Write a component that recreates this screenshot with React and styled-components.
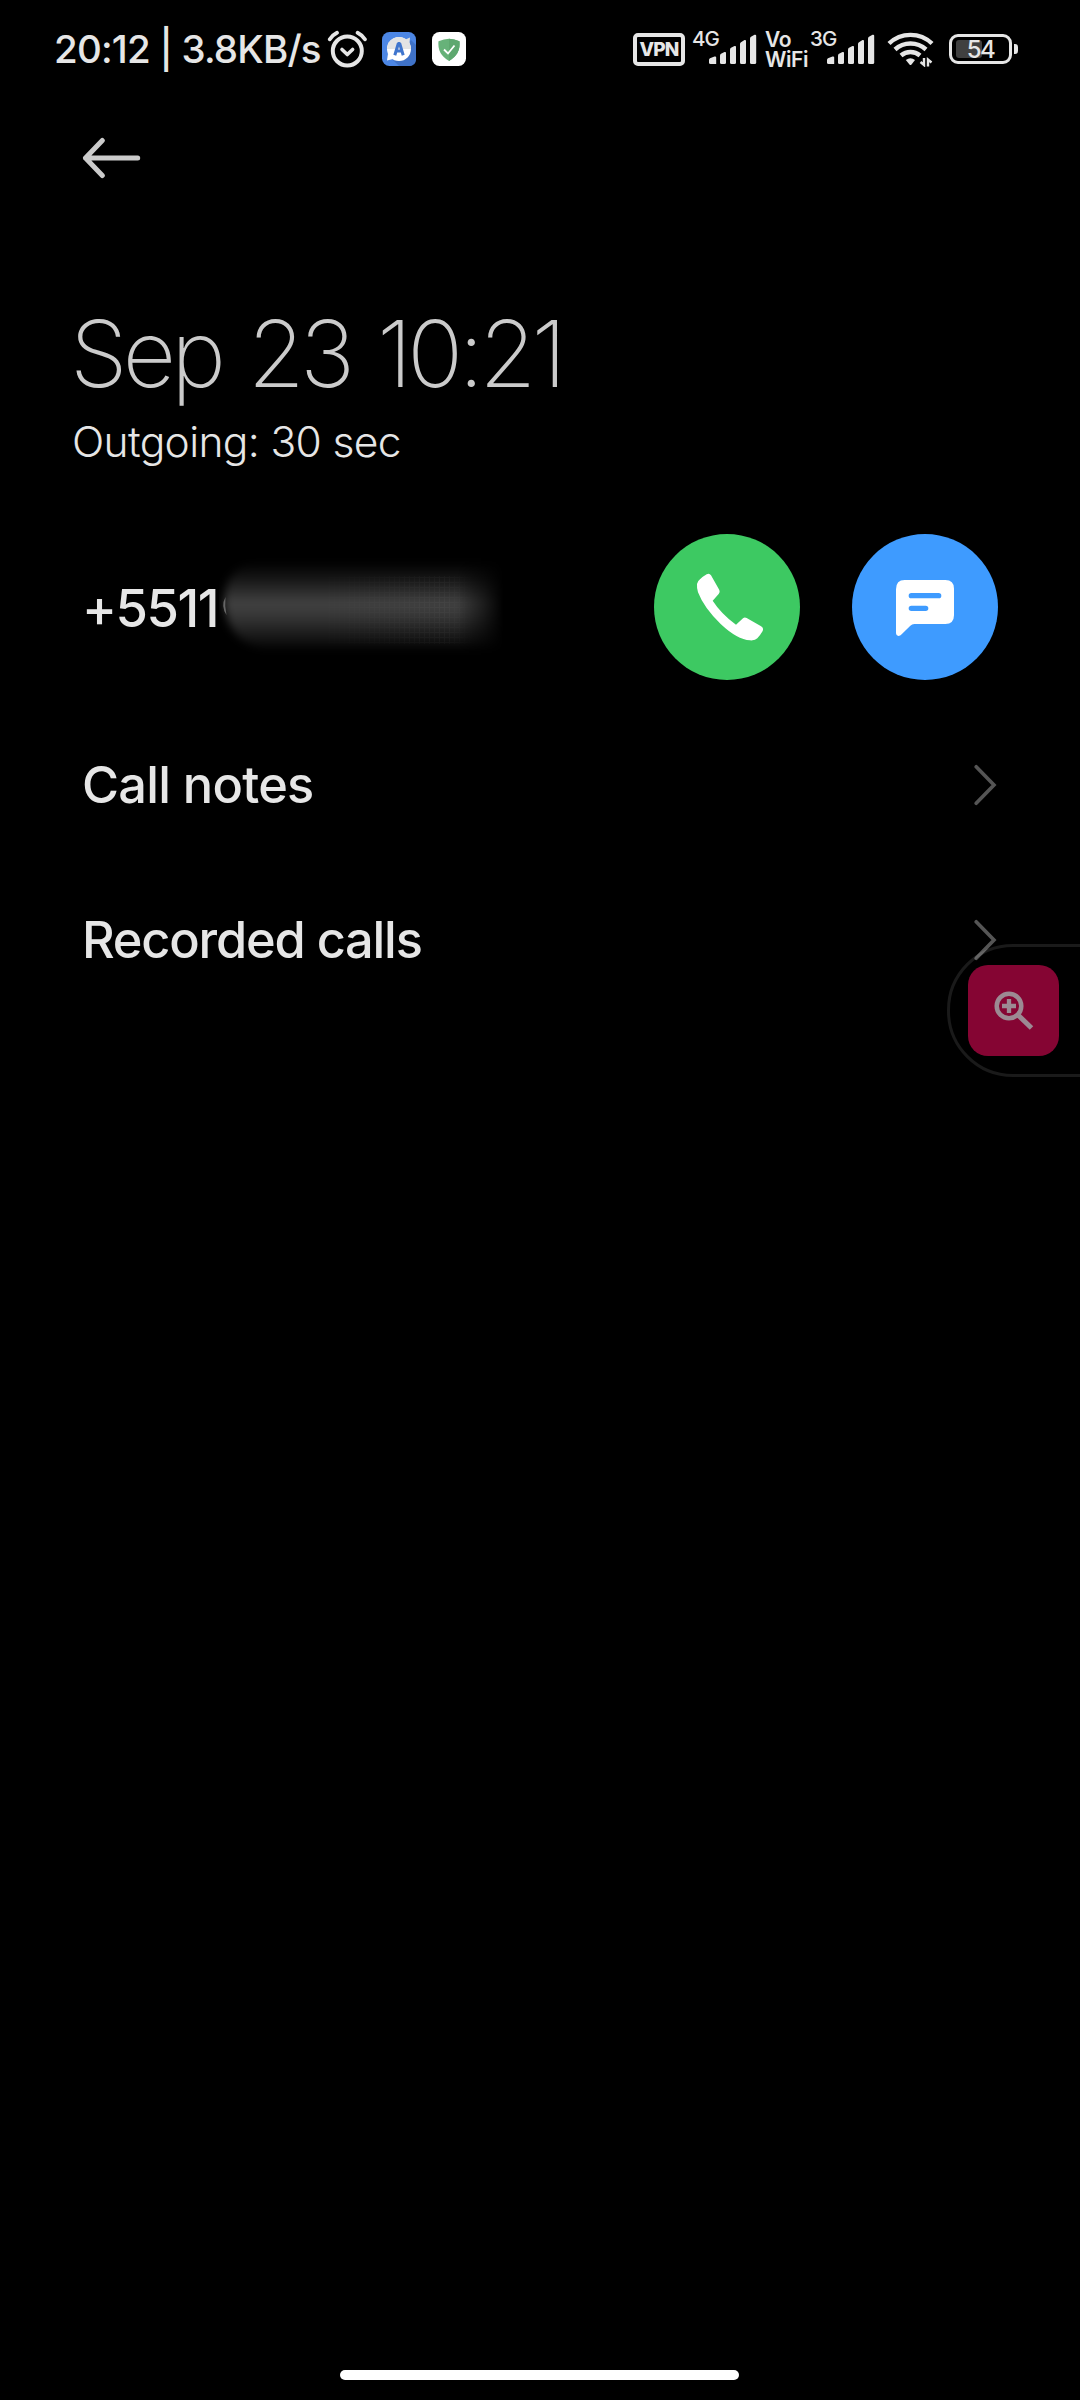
import React from 'react'
import styled, { createGlobalStyle } from 'styled-components'

const GlobalStyle = createGlobalStyle`
  body {
    margin: 0;
    background-color: #000;
  }
`;

const Page = styled.div`
  position: relative;
  display: flex;
  flex-direction: column;
  width: 1080px;
  height: 2400px;
  overflow: hidden;
  background-color: #000;
  color: #e6e6e6;
  font-family: Inter, Roboto, sans-serif;
  white-space: nowrap;
`;

const StatusBar = styled.div`
  display: flex;
  align-items: center;
  justify-content: space-between;
  height: 98px;
  padding: 0 62px 0 54px;
`;

const StatusGroup = styled.div`
  display: flex;
  align-items: center;
`;

const Clock = styled.span`
  width: 273px;
  font-size: 38.5px;
  font-weight: 500;
  line-height: 50px;
  letter-spacing: -0.8px;
`;

const AppIcon = styled.svg`
  margin-left: ${props => props.$gap}px;
`;

const VpnBadge = styled.div`
  box-sizing: border-box;
  width: 52px;
  height: 33px;
  border: 4px solid #e6e6e6;
  border-radius: 5px;
  font-size: 19px;
  font-weight: 800;
  line-height: 25px;
  letter-spacing: -0.8px;
  text-align: center;
`;

const Network = styled.div`
  display: flex;
  align-items: flex-start;
  width: 65px;
  height: 40px;
  margin-left: ${props => props.$gap}px;
`;

const NetworkType = styled.span`
  width: 17px;
  font-size: 20.5px;
  font-weight: 500;
  line-height: 19px;
  letter-spacing: -0.9px;
`;

const SignalBars = styled.svg`
  flex: none;
  margin-top: 5px;
`;

const VoWifi = styled.div`
  width: 45px;
  margin-left: 8px;
  padding-top: 2px;
  font-size: 21px;
  font-weight: 600;
  line-height: 20.5px;
  letter-spacing: -0.4px;
`;

const WifiIcon = styled.svg`
  margin-left: 12px;
`;

const Battery = styled.div`
  position: relative;
  box-sizing: border-box;
  width: 63px;
  height: 30px;
  margin-left: 14px;
  padding: 3px 4px;
  border: 3px solid #e6e6e6;
  border-radius: 9px;
`;

const BatteryLevel = styled.div`
  height: 100%;
  border-radius: 3px;
  background-color: #404040;
`;

const BatteryText = styled.span`
  position: absolute;
  inset: 0;
  font-size: 24px;
  font-weight: 500;
  line-height: 25px;
  letter-spacing: -1.6px;
  text-align: center;
`;

const BatteryTip = styled.div`
  width: 4px;
  height: 10px;
  margin-left: 2px;
  border-radius: 0 3px 3px 0;
  background-color: #e6e6e6;
`;

const Toolbar = styled.div`
  display: flex;
  align-items: center;
  height: 120px;
  padding-left: 81px;
`;

const Header = styled.header`
  padding: 80px 0 0 70px;
`;

const Title = styled.h1`
  margin: 0;
  color: #cbcbcb;
  font-size: 92.5px;
  font-weight: 200;
  line-height: 111px;
  letter-spacing: -4.8px;
  word-spacing: 5.5px;
`;

const Subtitle = styled.p`
  margin: 3px 0 0 2px;
  font-size: 42.5px;
  font-weight: 300;
  line-height: 60px;
  letter-spacing: -0.65px;
`;

const NumberRow = styled.div`
  display: flex;
  align-items: center;
  height: 146px;
  margin-top: 62px;
  padding: 0 82px;
`;

const PhoneNumber = styled.span`
  width: 137px;
  padding-top: 2px;
  font-size: 52.5px;
  font-weight: 500;
  line-height: 72px;
  letter-spacing: -1.5px;
`;

const Hidden = styled.svg`
  flex: none;
`;

const Round = styled.button`
  display: flex;
  width: 146px;
  height: 146px;
  margin: 0 0 0 ${props => props.$gap};
  padding: 0;
  border: none;
  border-radius: 50%;
  background-color: ${props => props.$color};
`;

const List = styled.div`
  margin-top: 27px;
`;

const ListRow = styled.div`
  display: flex;
  align-items: center;
  justify-content: space-between;
  height: 155px;
  padding: 0 82px;
  font-size: 50.5px;
  font-weight: 500;
  letter-spacing: ${props => props.$spacing};
`;

const FloatingTab = styled.div`
  position: absolute;
  top: 944px;
  right: -10px;
  box-sizing: border-box;
  width: 143px;
  height: 133px;
  padding: 18px 0 0 18px;
  border: 3px solid rgba(255, 255, 255, 0.1);
  border-radius: 66px 0 0 66px;
`;

const ZoomButton = styled.div`
  width: 91px;
  height: 91px;
  border-radius: 20px;
  background-color: #850533;
`;

const HomeBar = styled.div`
  width: 399px;
  height: 10px;
  margin: auto auto 20px 340px;
  border-radius: 5px;
  background-color: #fff;
`;

const Signal = () => (
  <SignalBars width="48" height="31" viewBox="0 0 48 31" fill="#e6e6e6">
    <path d="M0 28.5v-2.4q0-1.2 1-1.8L5.5 22.5q1.7-.5 1.7 1V30H1.5Q0 30 0 28.5z" />
    <path d="M11 28.5V21.5q0-1.2 1-1.8L15.5 18q1.5-.5 1.5 1V28.5Q17 30 15.5 30H12.5Q11 30 11 28.5z" />
    <path d="M21 28.5V15.5q0-1.2 1-1.8L25.5 12q1.5-.5 1.5 1V28.5Q27 30 25.5 30H22.5Q21 30 21 28.5z" />
    <path d="M31 28.5V10q0-1.2 1-1.8L35.5 6q1.5-.5 1.5 1V28.5Q37 30 35.5 30H32.5Q31 30 31 28.5z" />
    <path d="M41 28.5V4.5q0-1.2 1-1.8L45.5 .8q1.7-.5 1.7 1V28.5Q47.2 30 45.7 30H42.5Q41 30 41 28.5z" />
  </SignalBars>
);

const Chevron = () => (
  <svg width="24" height="42" viewBox="0 0 24 42" fill="none" stroke="#555" strokeWidth="3.6" strokeLinecap="round">
    <path d="M2.2 2.7L20 21L2.2 39.3" />
  </svg>
);

const rows = [
  { label: 'Call notes', spacing: '-0.75px' },
  { label: 'Recorded calls', spacing: '-1.2px' },
];

const App = () => {
  return (
    <Page>
      <GlobalStyle />
      <StatusBar>
        <StatusGroup>
          <Clock>20:12 | 3.8KB/s</Clock>
          <svg width="40" height="38" viewBox="0 0 40 38" fill="none" stroke="#e6e6e6" strokeLinecap="round">
            <circle cx="20.3" cy="21" r="14.5" strokeWidth="4" />
            <path d="M15 19.5L20.3 24.5L25.6 19.5" strokeWidth="3.6" strokeLinejoin="round" />
            <path d="M2.8 9.3Q5.5 5 10 2.8M30.6 2.8Q35 5 37.9 9.3" strokeWidth="3.8" />
          </svg>
          <AppIcon $gap={15} width="34" height="34" viewBox="0 0 34 34">
            <rect width="34" height="34" rx="7.5" fill="#4c86e4" />
            <path d="M11 28L17 34h10q7 0 7-7V13l-5-5z" fill="#3f72c8" />
            <circle cx="17" cy="17" r="12" fill="#fff" />
            <path d="M5 17a12 12 0 0 1 19-9.7L28 5.5l-.5 5.5a12 12 0 0 1 1.5 6z" fill="#e4e4e4" />
            <path d="M5 28.5l1-7 5 5.5z" fill="#fff" />
            <path d="M12.8 23.2L16.3 11.5H17.7L21.2 23.2M14.5 19h5" fill="none" stroke="#4076ce" strokeWidth="3" strokeLinejoin="bevel" />
          </AppIcon>
          <AppIcon $gap={16} width="34" height="34" viewBox="0 0 34 34">
            <rect width="34" height="34" rx="7.5" fill="#fff" />
            <path d="M17 6.7Q12 7 6.5 9.3Q5 22 17 29Q29 22 27.5 9.3Q22 7 17 6.7z" fill="#67b279" />
            <path d="M17 6.7Q22 7 27.5 9.3Q29 22 17 29z" fill="#5ea86f" />
            <path d="M12 17.5L16 21.5L22.5 13.5" fill="none" stroke="#fff" strokeWidth="1.8" />
          </AppIcon>
        </StatusGroup>
        <StatusGroup>
          <VpnBadge>VPN</VpnBadge>
          <Network $gap={7}>
            <NetworkType>4G</NetworkType>
            <Signal />
          </Network>
          <VoWifi>Vo<br />WiFi</VoWifi>
          <Network $gap={0}>
            <NetworkType>3G</NetworkType>
            <Signal />
          </Network>
          <WifiIcon width="48" height="36" viewBox="0 0 48 36" fill="none" stroke="#e6e6e6" strokeWidth="4.4">
            <path d="M2 12.5A31 31 0 0 1 45 12.5" />
            <path d="M8 18.5A23 23 0 0 1 39 18.5" />
            <path d="M14 24.5A14.5 14.5 0 0 1 33 24.5" />
            <path d="M18.8 29Q23.5 25.5 28 29L24.5 33.5Q23.5 34.5 22.5 33.5z" fill="#e6e6e6" stroke="none" />
            <path d="M37 27V34L33.5 31M41 35.5V28.5L44.5 31.5" strokeWidth="2.4" />
          </WifiIcon>
          <Battery>
            <BatteryLevel style={{ width: '54%' }} />
            <BatteryText>54</BatteryText>
          </Battery>
          <BatteryTip />
        </StatusGroup>
      </StatusBar>

      <Toolbar>
        <svg width="60" height="42" viewBox="0 0 60 42" fill="none" stroke="#cbcbcb" strokeWidth="5" strokeLinecap="round" strokeLinejoin="round">
          <path d="M21.3 3.5L4.5 21L21.3 38.5M4.5 21H56.7" />
        </svg>
      </Toolbar>

      <Header>
        <Title>Sep 23 10:21</Title>
        <Subtitle>Outgoing: 30 sec</Subtitle>
      </Header>

      <NumberRow>
        <PhoneNumber>+5511</PhoneNumber>
        {/* smudge over the rest of the number */}
        <Hidden width="290" height="110" viewBox="0 0 290 110">
          <defs>
            <linearGradient id="fade" x1="0" y1="0" x2="0" y2="1">
              <stop offset="0" stopColor="#fff" stopOpacity="0" />
              <stop offset="0.2" stopColor="#fff" stopOpacity="0.09" />
              <stop offset="0.48" stopColor="#fff" stopOpacity="0.26" />
              <stop offset="0.65" stopColor="#fff" stopOpacity="0.2" />
              <stop offset="0.9" stopColor="#fff" stopOpacity="0.07" />
              <stop offset="1" stopColor="#fff" stopOpacity="0.02" />
            </linearGradient>
            <pattern id="threads" width="5" height="5" patternUnits="userSpaceOnUse">
              <path d="M0 0H5M0 0V5" stroke="#fff" strokeOpacity="0.04" strokeWidth="2" />
            </pattern>
            <linearGradient id="sides" x1="0" y1="0" x2="1" y2="0">
              <stop offset="0" stopColor="#000" />
              <stop offset="0.5" stopColor="#777" />
              <stop offset="0.8" stopColor="#ccc" />
              <stop offset="1" stopColor="#000" />
            </linearGradient>
            <mask id="threadMask">
              <rect x="80" y="24" width="180" height="68" fill="url(#sides)" />
            </mask>
            <filter id="soft" x="-20%" y="-20%" width="140%" height="140%">
              <feGaussianBlur stdDeviation="4.5" />
            </filter>
            <linearGradient id="tail" x1="0" y1="0" x2="1" y2="0">
              <stop offset="0.82" stopColor="#fff" />
              <stop offset="0.91" stopColor="#777" />
              <stop offset="0.98" stopColor="#000" />
            </linearGradient>
            <mask id="tailMask">
              <rect width="290" height="110" fill="url(#tail)" />
            </mask>
          </defs>
          <g mask="url(#tailMask)">
            <path d="M5 50Q6 12 42 10H300V97H45Q8 90 5 50z" fill="url(#fade)" filter="url(#soft)" />
            <rect x="80" y="24" width="180" height="68" fill="url(#threads)" mask="url(#threadMask)" />
          </g>
          <path d="M6.5 45Q1.5 54 7.5 63Q5.5 54 6.5 45z" fill="#666" />
        </Hidden>
        <Round $color="#3dc962" $gap="145px">
          <svg width="146" height="146" viewBox="0 0 438 438" fill="#fff">
            <path d="M129 150Q130 142 138 136Q146 128 158 121Q166 116 171 124L196 168Q199 174 194 180L176 200Q202 240 246 272L267 253Q272 248 278 252L320 276Q330 281 326 291Q319 303 310 313Q304 320 288 319Q250 317 200 270Q150 222 132 175Q128 160 129 150z" />
          </svg>
        </Round>
        <Round $color="#3e9bff" $gap="52px">
          <svg width="146" height="146" viewBox="0 0 438 438">
            <path d="M132 166Q132 138 158 138H280Q306 138 306 164V244Q306 270 280 270H187Q180 270 175 275L149 301Q145 306 139 306Q132 305 132 298z" fill="#fff" />
            <path d="M178 185H260M178 223H221" stroke="#3e9bff" strokeWidth="16" strokeLinecap="round" />
          </svg>
        </Round>
      </NumberRow>

      <List>
        {rows.map((row) => (
          <ListRow key={row.label} $spacing={row.spacing}>
            {row.label}
            <Chevron />
          </ListRow>
        ))}
      </List>

      <FloatingTab>
        <ZoomButton>
          <svg width="91" height="91" viewBox="0 0 91 91" fill="none" stroke="#9c8a93">
            <circle cx="41" cy="41" r="12.3" strokeWidth="4.5" />
            <path d="M50 50L63.5 63" strokeWidth="5" />
            <path d="M34 41H48M41 34V48" strokeWidth="4.3" />
          </svg>
        </ZoomButton>
      </FloatingTab>

      <HomeBar />
    </Page>
  );
};

export default App;
